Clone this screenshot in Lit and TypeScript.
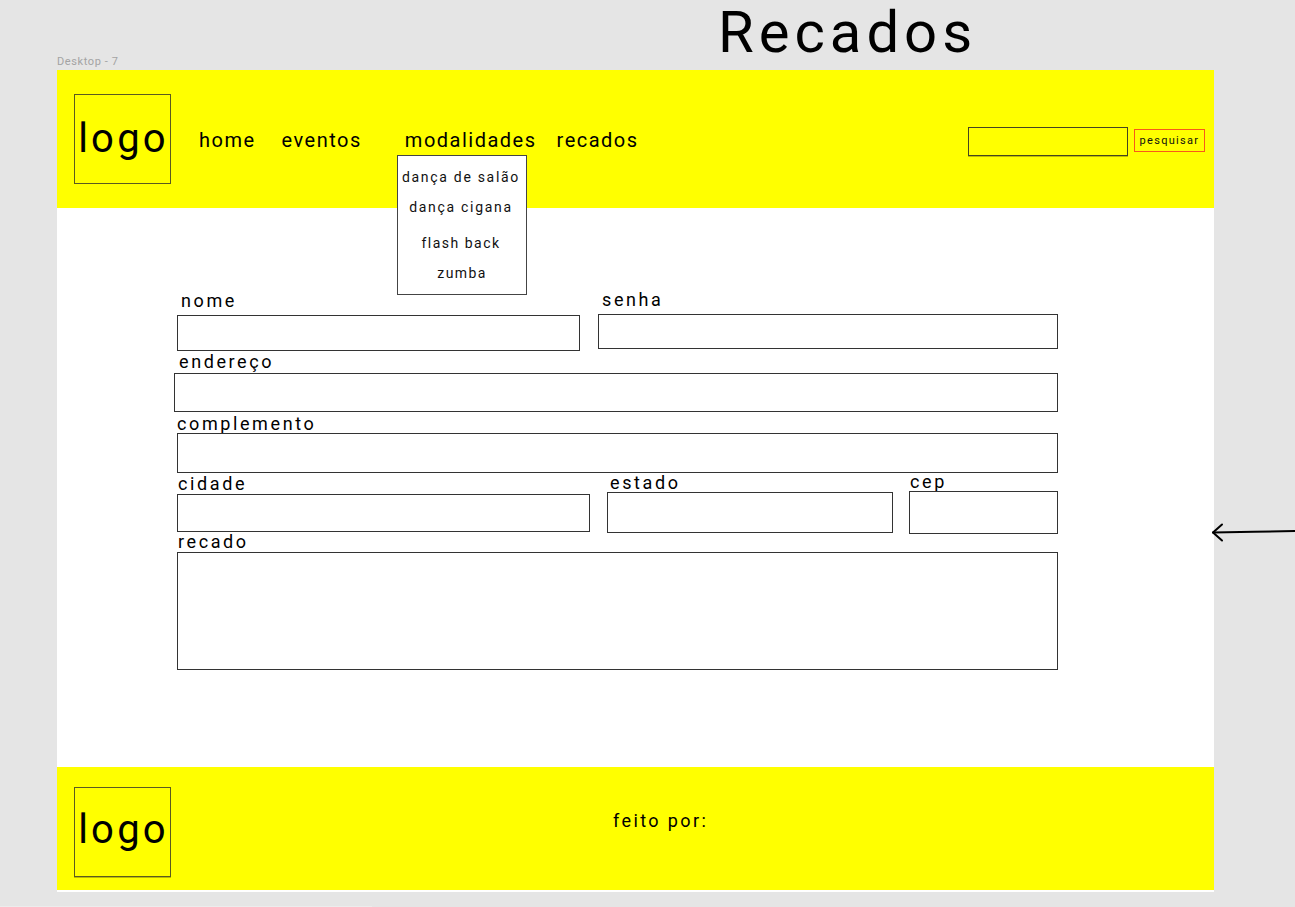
import { LitElement, html, css } from "lit";
import { customElement } from "lit/decorators.js";

@customElement("app-root")
export class AppRoot extends LitElement {
  static styles = css`
    :host {
      display: block;
      position: relative;
      width: 1295px;
      height: 907px;
      overflow: hidden;
      background: #e5e5e5;
      font-family: Roboto, "Liberation Sans", sans-serif;
      color: #000;
    }
    .title-bar { height: 70px; position: relative; padding: 1px 0 0 718px; box-sizing: border-box; }
    .title { margin: 0; font-weight: 400; font-size: 58px; line-height: 62px; letter-spacing: 5px; }
    .frame-name { position: absolute; left: 57px; top: 55px; font-size: 11px; line-height: 14px; color: #a3a3a3; letter-spacing: 0.6px; }
    .frame { margin-left: 57px; width: 1156.5px; height: 822px; background: #fff; display: flex; flex-direction: column; }
    .header { height: 138px; flex: none; background: #ff0; display: flex; align-items: flex-start; position: relative; box-sizing: border-box; padding: 24px 9px 0 17px; }
    .logo { flex: none; width: 97px; height: 90px; box-sizing: border-box; border: 1px solid #5a5a20; display: flex; align-items: center; justify-content: center; font-size: 40px; letter-spacing: 3.2px; line-height: 48px; }
    .header .logo { padding: 0 0 0 2px; }
    .footer .logo { padding: 0 0 4px 2px; box-shadow: 0 1px 0 #bdbd00; }
    .nav { display: flex; margin: 36px 0 0 28px; font-size: 20px; line-height: 20px; letter-spacing: 1.5px; }
    .nav span { display: block; white-space: nowrap; }
    .nav .eventos { margin-left: 26px; }
    .nav .modalidades { margin-left: 43px; }
    .nav .recados { margin-left: 20px; }
    .search { margin-left: auto; display: flex; align-items: flex-start; margin-top: 33px; }
    .search-box { width: 160px; height: 29px; box-sizing: border-box; border: 1px solid #444420; box-shadow: 0 1px 0 #bdbd00; }
    .search-btn { margin: 2px 0 0 6px; width: 71px; height: 23px; box-sizing: border-box; border: 1.5px solid #f9591a; padding-left: 1px; display: flex; align-items: center; justify-content: center; font-size: 11px; letter-spacing: 1.3px; color: #111; }
    .dropdown { position: absolute; left: 340px; top: 85px; width: 130px; height: 140px; box-sizing: border-box; border: 1px solid #444; background: #fff; z-index: 2; font-size: 14px; line-height: 16px; letter-spacing: 1.7px; color: #111; text-align: center; }
    .dropdown div { position: absolute; left: 0; right: 2px; white-space: nowrap; }
    .dropdown .d1 { top: 13px; }
    .dropdown .d2 { top: 43px; }
    .dropdown .d3 { top: 79px; letter-spacing: 1.5px; }
    .dropdown .d4 { top: 109px; right: 0; letter-spacing: 1.4px; }
    .main { flex: 1; box-sizing: border-box; padding: 84px 0 0 120px; display: flex; flex-direction: column; }
    .row { display: flex; align-items: flex-start; }
    .field { display: flex; flex-direction: column; flex: none; }
    .label { height: 22px; font-size: 18px; line-height: 22px; letter-spacing: 2.6px; white-space: nowrap; }
    .box { box-sizing: border-box; border: 1px solid #333; background: #fff; }
    .f-nome { width: 403px; margin-top: 1px; }
    .f-nome .label { padding-left: 4px; margin: -3px 0 3px; }
    .f-nome .box { height: 36px; }
    .f-senha { width: 460px; margin-left: 18px; }
    .f-senha .label { padding-left: 4px; margin: -3px 0 3px; }
    .f-senha .box { height: 35px; }
    .f-end { width: 884px; margin-left: -3px; }
    .f-end .label { padding-left: 5px; }
    .f-end .box { height: 39px; }
    .f-comp { width: 881px; margin-top: -1px; }
    .f-comp .label { margin: 2px 0 -2px; }
    .f-comp .box { height: 40px; }
    .row-cidade { margin-top: -4px; }
    .f-cid { width: 413px; margin-top: 3px; }
    .f-cid .label { padding-left: 1px; margin: 1px 0 -1px; }
    .f-cid .box { height: 38px; }
    .f-est { width: 286px; margin: 1px 0 0 17px; }
    .f-est .label { padding-left: 3px; margin: 2px 0 -2px; }
    .f-est .box { height: 41px; }
    .f-cep { width: 149px; margin-left: 16px; }
    .f-cep .label { padding-left: 1px; margin: 2px 0 -2px; }
    .f-cep .box { height: 43px; }
    .f-rec { width: 881px; margin-top: -4px; }
    .f-rec .label { padding-left: 1px; margin: 1px 0 -1px; }
    .f-rec .box { height: 118px; }
    .footer { height: 123px; flex: none; margin-bottom: 2px; background: #ff0; display: flex; align-items: flex-start; box-sizing: border-box; padding: 20px 0 0 17px; }
    .feito { margin: 23px 0 0 442px; font-size: 18px; line-height: 22px; letter-spacing: 2.4px; }
    .arrow { position: absolute; left: 1209px; top: 520px; width: 86px; height: 26px; }
    .edge { position: absolute; left: 0; bottom: 0; width: 372px; height: 1px; background: #ececec; }
  `;

  render() {
    return html`
      <div class="title-bar"><h1 class="title">Recados</h1></div>
      <div class="frame-name">Desktop - 7</div>
      <div class="frame">
        <header class="header">
          <div class="logo">logo</div>
          <nav class="nav">
            <span>home</span>
            <span class="eventos">eventos</span>
            <span class="modalidades">modalidades</span>
            <span class="recados">recados</span>
          </nav>
          <div class="search">
            <div class="search-box"></div>
            <div class="search-btn">pesquisar</div>
          </div>
          <div class="dropdown">
            <div class="d1">dança de salão</div>
            <div class="d2">dança cigana</div>
            <div class="d3">flash back</div>
            <div class="d4">zumba</div>
          </div>
        </header>
        <main class="main">
          <div class="row">
            <div class="field f-nome"><div class="label">nome</div><div class="box"></div></div>
            <div class="field f-senha"><div class="label">senha</div><div class="box"></div></div>
          </div>
          <div class="row">
            <div class="field f-end"><div class="label">endereço</div><div class="box"></div></div>
          </div>
          <div class="row">
            <div class="field f-comp"><div class="label">complemento</div><div class="box"></div></div>
          </div>
          <div class="row row-cidade">
            <div class="field f-cid"><div class="label">cidade</div><div class="box"></div></div>
            <div class="field f-est"><div class="label">estado</div><div class="box"></div></div>
            <div class="field f-cep"><div class="label">cep</div><div class="box"></div></div>
          </div>
          <div class="row">
            <div class="field f-rec"><div class="label">recado</div><div class="box"></div></div>
          </div>
        </main>
        <footer class="footer">
          <div class="logo">logo</div>
          <div class="feito">feito por:</div>
        </footer>
      </div>
      <svg class="arrow" viewBox="0 0 86 26" fill="none" stroke="#000" stroke-width="2" stroke-linecap="round" stroke-linejoin="round">
        <path d="M86 11 C 60 11.5 30 12 4 12.5" />
        <path d="M13 4.5 L4 12.5 L13 20.5" />
      </svg>
      <div class="edge"></div>
    `;
  }
}
